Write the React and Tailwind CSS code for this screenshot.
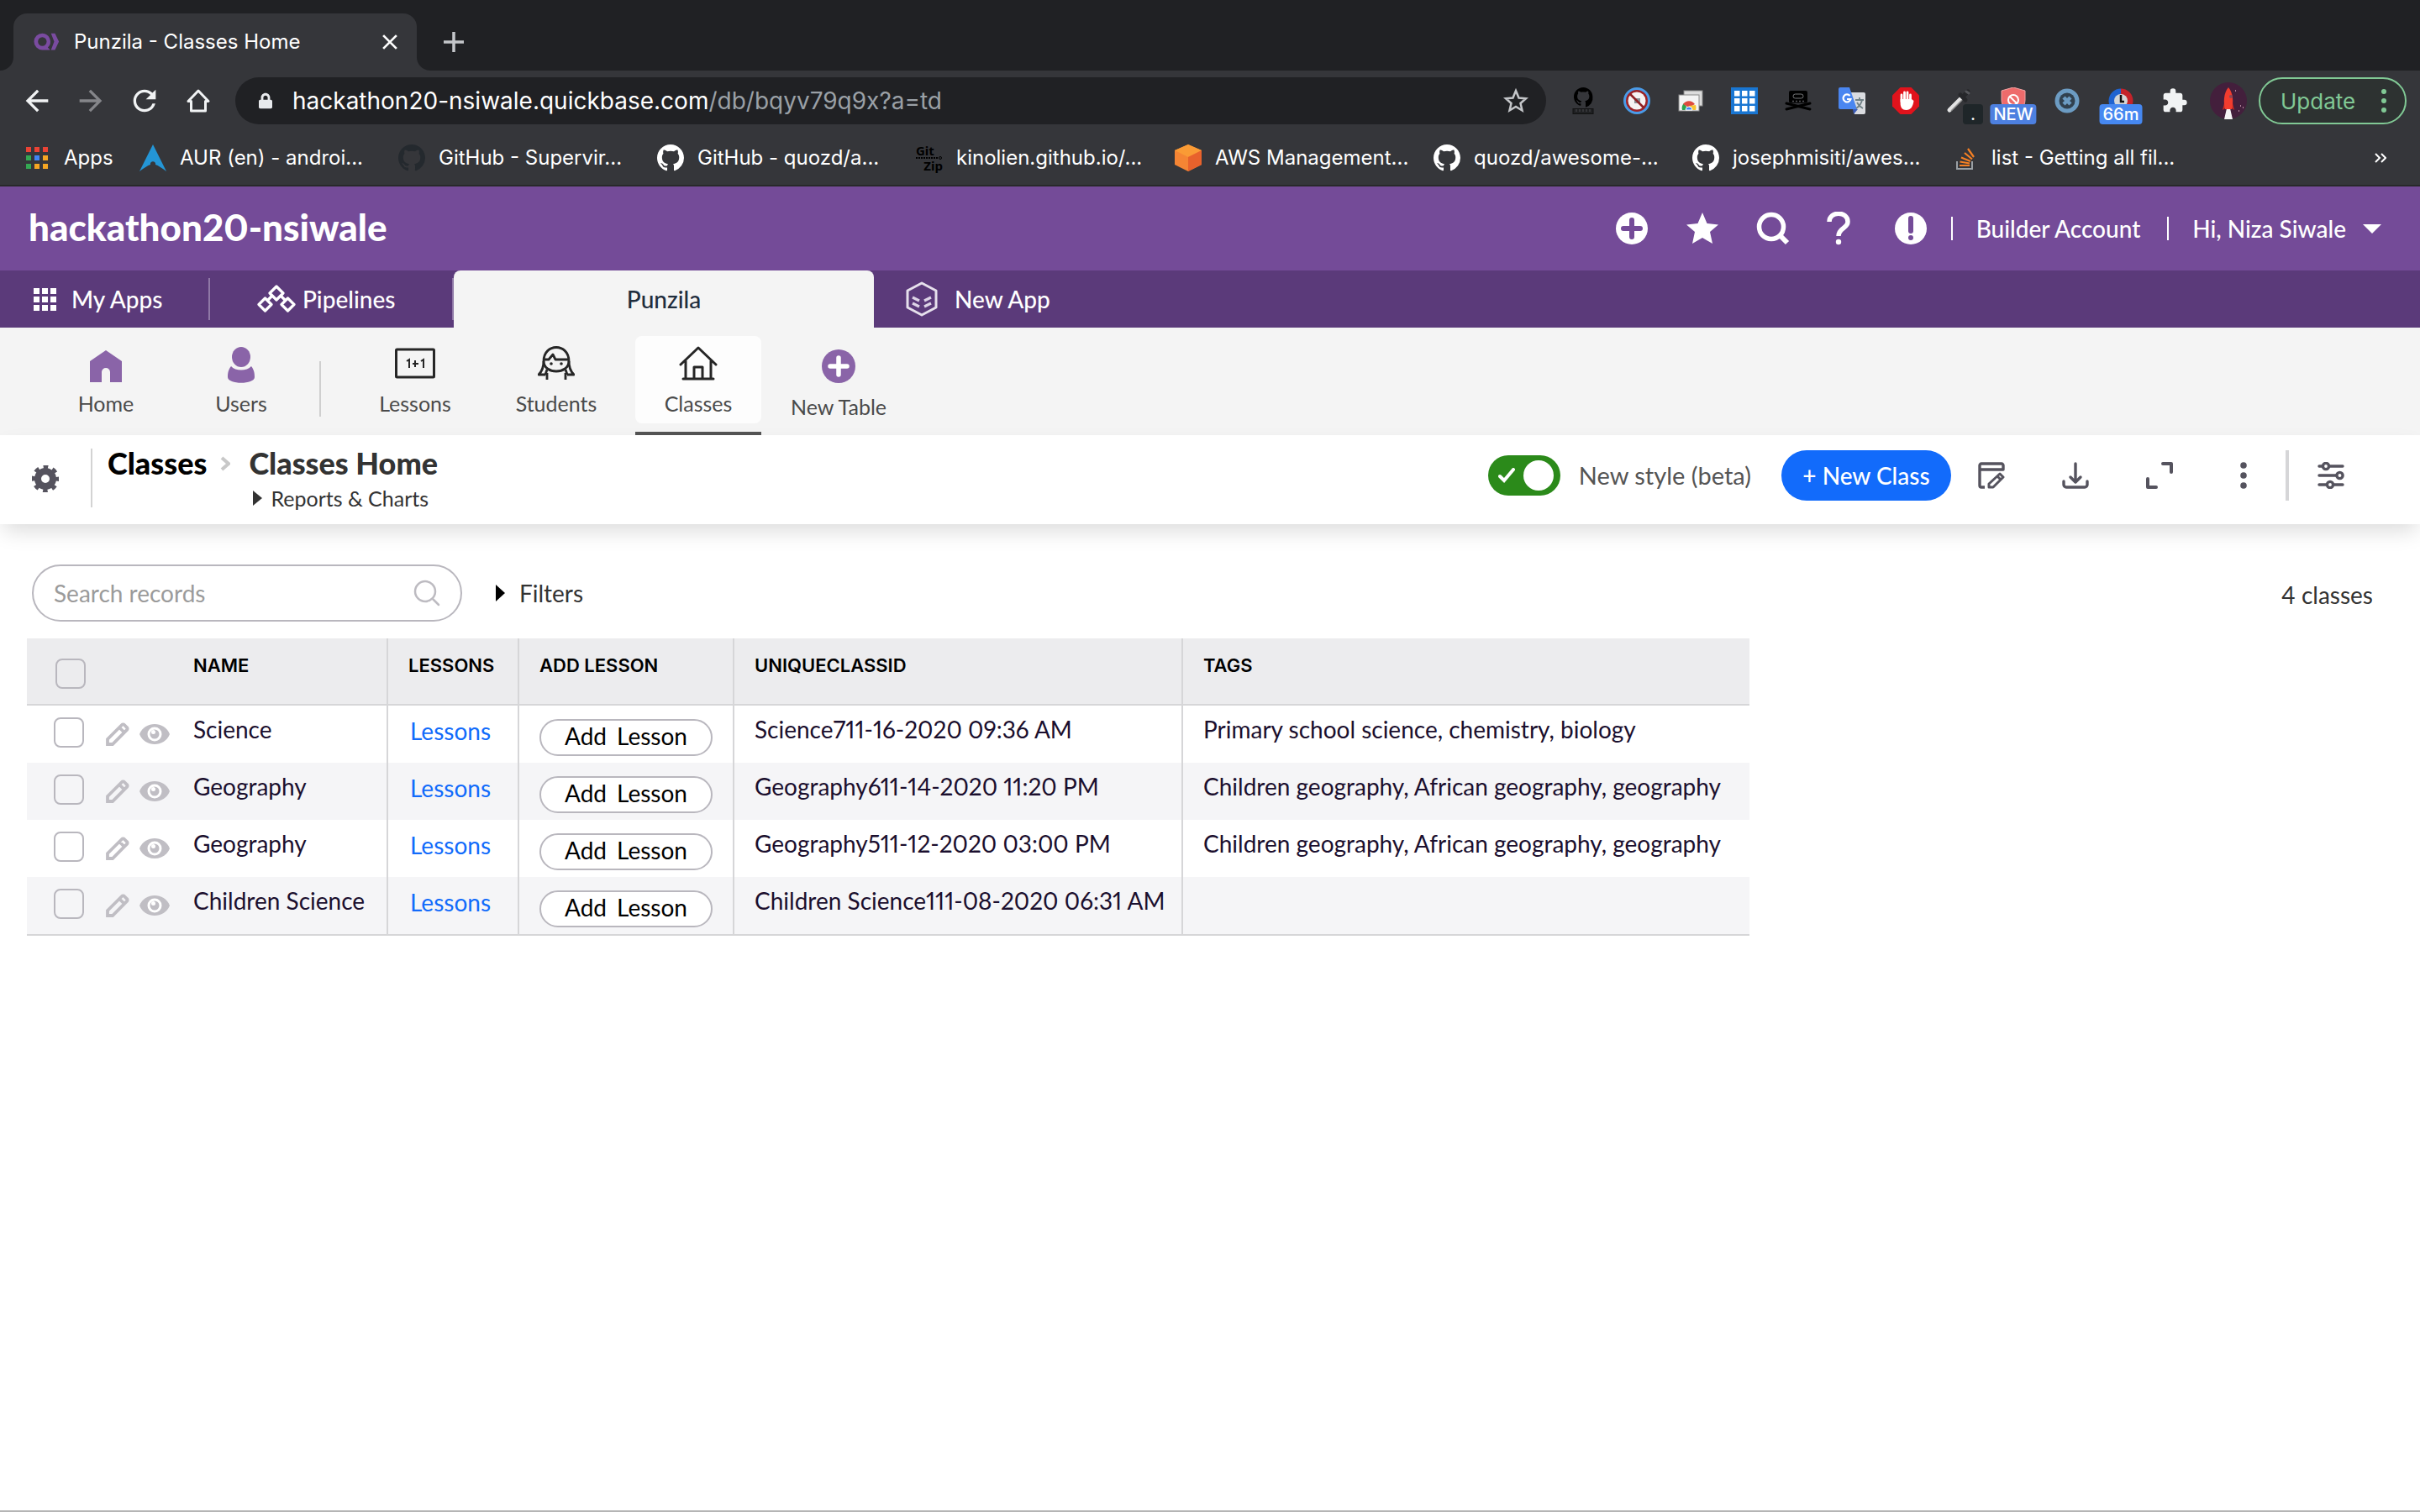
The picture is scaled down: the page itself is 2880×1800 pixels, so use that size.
import { FaLock } from "react-icons/fa";
import { MdArrowBack, MdArrowForward, MdRefresh } from "react-icons/md";

const Svg = ({ className, vb = "0 0 32 32", children }) => (
  <svg viewBox={vb} className={className} fill="none" aria-hidden="true">
    {children}
  </svg>
);

const GithubMark = ({ className }) => (
  <svg viewBox="0 0 16 16" className={className} fill="currentColor" aria-hidden="true">
    <path d="M8 0C3.58 0 0 3.58 0 8c0 3.54 2.29 6.53 5.47 7.59.4.07.55-.17.55-.38 0-.19-.01-.82-.01-1.49-2.01.37-2.53-.49-2.69-.94-.09-.23-.48-.94-.82-1.13-.28-.15-.68-.52-.01-.53.63-.01 1.08.58 1.23.82.72 1.21 1.87.87 2.33.66.07-.52.28-.87.51-1.07-1.78-.2-3.64-.89-3.64-3.95 0-.87.31-1.59.82-2.15-.08-.2-.36-1.02.08-2.12 0 0 .67-.21 2.2.82.64-.18 1.32-.27 2-.27s1.36.09 2 .27c1.53-1.04 2.2-.82 2.2-.82.44 1.1.16 1.92.08 2.12.51.56.82 1.27.82 2.15 0 3.07-1.87 3.75-3.65 3.95.29.25.54.73.54 1.48 0 1.07-.01 1.93-.01 2.2 0 .21.15.46.55.38A8.01 8.01 0 0 0 16 8c0-4.42-3.58-8-8-8z" />
  </svg>
);

/* ---------- Browser tab strip ---------- */
function TabStrip() {
  return (
    <div className="flex h-[84px] items-end bg-[#202124]">
      <Svg vb="0 0 16 16" className="size-4 shrink-0">
        <path d="M0 16H16V0A16 16 0 0 1 0 16Z" fill="#35363a" />
      </Svg>
      <div className="flex h-[68px] w-[480px] items-center rounded-t-2xl bg-[#35363a] pr-4 pl-6">
        <Svg vb="0 0 34 24" className="h-6 w-8">
          <path fillRule="evenodd" d="M11 1A10.500 10.500 0 1 0 11 22H21L18 19A10.500 10.500 0 0 0 11 1ZM11 6A5.500 5.500 0 1 1 11 17A5.500 5.500 0 0 1 11 6Z" fill="#7a4ba0" />
          <path d="M22 1H27L32 11.500L27 22H22L26 11.500Z" fill="#7a4ba0" />
        </Svg>
        <span className="ml-4 flex-1 text-[24px] text-white">Punzila - Classes Home</span>
        <button aria-label="Close tab" className="flex size-8 items-center justify-center">
          <Svg vb="0 0 16 16" className="size-[18px]">
            <path d="M1 1L15 15M15 1L1 15" stroke="#fff" strokeWidth="2.4" />
          </Svg>
        </button>
      </div>
      <Svg vb="0 0 16 16" className="size-4 shrink-0">
        <path d="M0 0A16 16 0 0 0 16 16H0Z" fill="#35363a" />
      </Svg>
      <button aria-label="New tab" className="ml-4 flex h-[68px] items-center">
        <Svg vb="0 0 24 24" className="size-6">
          <path d="M12 0V24M0 12H24" stroke="#c4c6ca" strokeWidth="3.500" />
        </Svg>
      </button>
    </div>
  );
}

/* ---------- Extension icons ---------- */
const extensions = [
  ["Octolinker", (
    <Svg>
      <g transform="translate(5 0) scale(1.4)" fill="#000">
        <path d="M8 0C3.58 0 0 3.58 0 8c0 3.54 2.29 6.53 5.47 7.59.4.07.55-.17.55-.38 0-.19-.01-.82-.01-1.49-2.01.37-2.53-.49-2.69-.94-.09-.23-.48-.94-.82-1.13-.28-.15-.68-.52-.01-.53.63-.01 1.08.58 1.23.82.72 1.21 1.87.87 2.33.66.07-.52.28-.87.51-1.07-1.78-.2-3.64-.89-3.64-3.95 0-.87.31-1.59.82-2.15-.08-.2-.36-1.02.08-2.12 0 0 .67-.21 2.2.82.64-.18 1.32-.27 2-.27s1.36.09 2 .27c1.53-1.04 2.2-.82 2.2-.82.44 1.1.16 1.92.08 2.12.51.56.82 1.27.82 2.15 0 3.07-1.87 3.75-3.65 3.95.29.25.54.73.54 1.48v2.200 0 .21.15.46.55.38A8.010 8.010 0 0 0 16 8c0-4.42-3.58-8-8-8z" />
      </g>
      <rect x="4" y="25.500" width="24" height="6" fill="#1f2022" stroke="#111" />
      <path d="M8 26v3M12 26v3M16 26v3M20 26v3M24 26v3" stroke="#4a4b4e" />
    </Svg>
  )],
  ["Site blocker", (
    <Svg>
      <circle cx="16" cy="16" r="14.500" fill="#9b2226" stroke="#4a9be8" strokeWidth="3" />
      <circle cx="16" cy="16" r="10.500" fill="#f6f3f3" />
      <rect x="13" y="13" width="7" height="6" fill="#8b8f94" />
      <path d="M8 8L24 24" stroke="#8f2024" strokeWidth="2.500" />
    </Svg>
  )],
  ["Remote desktop", (
    <Svg>
      <rect x="8" y="4" width="22" height="18" fill="#dcdcdc" stroke="#8a8a8a" />
      <rect x="2" y="9" width="24" height="19" fill="#f4f4f4" stroke="#8a8a8a" />
      <path d="M6 27A8 8 0 0 1 8 19L14 27Z" fill="#2da44e" />
      <path d="M7 20A8.500 8.500 0 0 1 21 20L14 24Z" fill="#dd4b3e" />
      <path d="M14 22L22 21A9 9 0 0 1 22 27H14Z" fill="#f7c331" />
      <path d="M10 27A4 4 0 0 1 18 27Z" fill="#4285f4" stroke="#fff" />
    </Svg>
  )],
  ["App grid", (
    <Svg>
      <rect width="32" height="32" fill="#1976d2" />
      <g fill="#fff">
        {[4, 13, 22].map((y) => [4, 13, 22].map((x) => <rect key={`${x}-${y}`} x={x} y={y} width="6.500" height="6.500" />))}
      </g>
    </Svg>
  )],
  ["Pirate tape", (
    <Svg>
      <path d="M2 19L30 26M30 19L2 26" stroke="#000" strokeWidth="3" strokeLinecap="round" />
      <rect x="5" y="4" width="22" height="14.500" rx="2" fill="#000" />
      <rect x="10" y="8" width="12" height="5" rx="2.500" stroke="#77787b" />
      <path d="M9 16.500H23" stroke="#55565a" strokeWidth="1.500" strokeDasharray="2 2" />
    </Svg>
  )],
  ["Translate", (
    <Svg>
      <path d="M14 6H30A2 2 0 0 1 32 8V30A2 2 0 0 1 30 32H19Z" fill="#dadce0" />
      <path d="M17 26H23L18 32Z" fill="#3a5bb8" />
      <path d="M2 0H13L22 26H2A2 2 0 0 1 0 24V2A2 2 0 0 1 2 0Z" fill="#4a86f0" />
      <path d="M13.500 10A4.500 4.500 0 1 0 14.500 14H10" stroke="#fff" strokeWidth="2.200" />
      <path d="M20 15H30M25 12V15M28 15C27 20 24 23 21 25M22 18C24 22 27 24 29 25" stroke="#6f8085" strokeWidth="1.800" />
    </Svg>
  )],
  ["Ad blocker", (
    <Svg>
      <path d="M9.500 0H22.500L32 9.500V22.500L22.500 32H9.500L0 22.500V9.500Z" fill="#e1131c" />
      <path d="M11 17V9M14.500 16V6M18 16V6M21.500 17V9" stroke="#fff" strokeWidth="2.800" strokeLinecap="round" />
      <path d="M9.600 14H23L25.500 16C24.500 23 22 27 16.500 27C12 27 9.600 24 9.600 19Z" fill="#fff" />
    </Svg>
  )],
  ["Color picker", (
    <Svg>
      <path d="M19 12L4 27" stroke="#e4e4e4" strokeWidth="5" strokeLinecap="round" />
      <path d="M19 15L6 28" stroke="#909090" strokeWidth="1.500" />
      <path d="M17 9L23 15M21 10L26 5" stroke="#26272a" strokeWidth="5" strokeLinecap="round" />
      <path d="M24 5L27 7" stroke="#55565a" strokeWidth="3" strokeLinecap="round" />
    </Svg>
  ), ".", "bg-[#1f2629]"],
  ["Shield", (
    <Svg>
      <path d="M16 0L30 4V15C30 24 22 30 16 32C10 30 2 24 2 15V4Z" fill="#ee6b6b" stroke="#f5a5a5" />
      <circle cx="16" cy="15" r="6" stroke="#fff" strokeWidth="2" />
      <path d="M12 11L20 19" stroke="#fff" strokeWidth="2" />
    </Svg>
  ), "NEW", "bg-[#4d80e0]"],
  ["Clear", (
    <Svg>
      <circle cx="16" cy="16" r="14.500" fill="#6c9cc3" />
      <circle cx="16" cy="16" r="9.500" fill="#31414f" />
      <path d="M12 12L20 20M20 12L12 20" stroke="#6c9cc3" strokeWidth="4.500" />
    </Svg>
  )],
  ["Timer", (
    <Svg>
      <path d="M16 1.500A14.500 14.500 0 0 0 16 30.500Z" fill="#1f63d0" />
      <path d="M16 1.500A14.500 14.500 0 0 1 16 30.500Z" fill="#c4232a" />
      <circle cx="16" cy="16" r="8" fill="#d4d6d8" />
      <path d="M16 9V17H20" stroke="#111" strokeWidth="2.500" />
    </Svg>
  ), "66m", "bg-[#4688f1]"],
];

function Extension({ label, icon, badge, badgeClass }) {
  return (
    <button aria-label={label} className="relative flex size-8 shrink-0 items-center justify-center">
      <span className="block size-8 [&>svg]:size-8">{icon}</span>
      {badge && (
        <span className={`absolute top-5 left-1/2 flex h-6 -translate-x-1/2 items-center justify-center rounded px-1 text-[20px] font-medium text-white ${badge === "." ? "ml-4 w-6" : ""} ${badgeClass}`}>
          {badge}
        </span>
      )}
    </button>
  );
}

/* ---------- Address bar ---------- */
function Toolbar() {
  return (
    <div className="flex h-[72px] items-center pr-4 pl-6">
      <div className="flex items-center gap-6">
        <button aria-label="Back"><MdArrowBack className="size-10 text-[#f1f3f4]" /></button>
        <button aria-label="Forward"><MdArrowForward className="size-10 text-[#85868a]" /></button>
        <button aria-label="Reload"><MdRefresh className="size-10 text-[#f1f3f4]" /></button>
        <button aria-label="Home page">
          <Svg vb="0 0 40 40" className="size-10">
            <path d="M20 8L32 20.500H28.500V32H11.500V20.500H8Z" stroke="#f1f3f4" strokeWidth="3" strokeLinejoin="round" />
          </Svg>
        </button>
      </div>
      <div className="ml-6 flex h-14 flex-1 items-center rounded-full bg-[#202124] pr-5 pl-7">
        <FaLock className="h-5 w-4 text-[#e8eaed]" />
        <span className="ml-6 flex-1 text-[28px] text-white">
          hackathon20-nsiwale.quickbase.com<span className="text-[#9aa0a6]">/db/bqyv79q9x?a=td</span>
        </span>
        <button aria-label="Bookmark this page">
          <Svg className="size-8">
            <path d="M16 4L19.500 12.500L28 13.200L21.500 19L23.500 27.500L16 23L8.500 27.500L10.500 19L4 13.200L12.500 12.500Z" stroke="#c4c6c9" strokeWidth="2.500" />
          </Svg>
        </button>
      </div>
      <div className="ml-7 flex items-center gap-8">
        {extensions.map(([label, icon, badge, badgeClass]) => (
          <Extension key={label} label={label} icon={icon} badge={badge} badgeClass={badgeClass} />
        ))}
        <button aria-label="Extensions">
          <svg viewBox="0 0 24 24" className="size-8" fill="#f1f3f4" aria-hidden="true">
            <path d="M20.500 11H19V7c0-1.100-.9-2-2-2h-4V3.500a2.500 2.500 0 0 0-5 0V5H4c-1.100 0-2 .9-2 2v3.800h1.500c1.490 0 2.700 1.210 2.700 2.700s-1.210 2.700-2.700 2.700H2V20c0 1.100.9 2 2 2h3.800v-1.500c0-1.490 1.210-2.700 2.700-2.700s2.700 1.210 2.700 2.700V22H17c1.100 0 2-.9 2-2v-4h1.500a2.500 2.500 0 0 0 0-5z" />
          </svg>
        </button>
      </div>
      <button aria-label="Profile" className="ml-[26px]">
        <Svg vb="0 0 44 44" className="size-11">
          <circle cx="22" cy="22" r="22" fill="#431f3c" />
          <path d="M17 44L20 31H24L27 44Z" fill="#f4f4f4" />
          <path d="M15 33L17 25H27L29 33L26 31H18Z" fill="#c92a22" />
          <path d="M22 6C28 13 28 24 26 32H18C16 24 16 13 22 6Z" fill="#f23c2e" />
          <circle cx="25" cy="17" r="2" fill="#8d4754" />
          <path d="M30 10h1M36 28h1M34 34h1M39 30h1" stroke="#d9a9bd" strokeWidth="1.500" />
        </Svg>
      </button>
      <button className="ml-[14px] flex h-14 w-[176px] items-center justify-between rounded-full border-2 border-[#81c995] bg-[#2d3231] pr-[22px] pl-6 text-[26px] text-[#81c995]">
        Update
        <Svg vb="0 0 6 28" className="h-7 w-[6px]">
          <g fill="#81c995"><circle cx="3" cy="3" r="3" /><circle cx="3" cy="14" r="3" /><circle cx="3" cy="25" r="3" /></g>
        </Svg>
      </button>
    </div>
  );
}

/* ---------- Bookmarks ---------- */
const AurIcon = () => (
  <Svg className="size-8">
    <path d="M16 0L32 32C27 28 22 25 19 24C20 19 12 19 13 24C10 25 5 28 0 32Z" fill="#2496d6" />
  </Svg>
);
const GitZipIcon = () => (
  <span className="flex size-8 flex-col justify-between font-['Noto_Sans',sans-serif] text-[15px] leading-[14px] font-bold text-black">
    <span>Git</span>
    <Svg vb="0 0 32 4" className="h-1 w-8">
      <path d="M0 2H26" stroke="#000" strokeWidth="2" strokeDasharray="2 1" />
      <circle cx="29" cy="2" r="1.500" stroke="#000" />
    </Svg>
    <span className="self-end">Zip</span>
  </span>
);
const AwsIcon = () => (
  <Svg className="size-8">
    <path d="M16 0L32 7V24L16 32L0 24V7Z" fill="#f58534" />
    <path d="M16 0L32 7L16 15L0 7Z" fill="#fa9b35" />
    <path d="M32 7V24L16 32V15Z" fill="#e8622c" />
  </Svg>
);
const StackIcon = () => (
  <Svg className="size-8">
    <path d="M7 20V29H25V20" stroke="#9aa0a4" strokeWidth="2" />
    <path d="M10 25H22M10.500 20.500L22 22.500M12 15.500L23 20M16 10L25 17.500M20 5L27 15" stroke="#f48024" strokeWidth="2.200" />
  </Svg>
);

const bookmarks = [
  [<AurIcon />, "AUR (en) - androi..."],
  [<GithubMark className="size-8 text-[#24292e]" />, "GitHub - Supervir..."],
  [<GithubMark className="size-8 text-white" />, "GitHub - quozd/a..."],
  [<GitZipIcon />, "kinolien.github.io/..."],
  [<AwsIcon />, "AWS Management..."],
  [<GithubMark className="size-8 text-white" />, "quozd/awesome-..."],
  [<GithubMark className="size-8 text-white" />, "josephmisiti/awes..."],
  [<StackIcon />, "list - Getting all fil..."],
];

const appColors = ["#ea4335", "#ea4335", "#ea4335", "#34a853", "#4285f4", "#f5a623", "#34a853", "#f5a623", "#f5a623"];

function Bookmarks() {
  return (
    <div className="flex h-[66px] items-center border-b-2 border-[#28292a] pr-10 pl-[31px] text-[24px] text-white">
      <a href="#apps" className="flex w-[135px] shrink-0 items-center gap-[19px]">
        <Svg vb="0 0 26 26" className="size-[26px]">
          {appColors.map((c, i) => (
            <rect key={i} x={(i % 3) * 10} y={Math.floor(i / 3) * 10} width="6" height="6" fill={c} />
          ))}
        </Svg>
        Apps
      </a>
      {bookmarks.map(([icon, label]) => (
        <a key={label} href="#bookmark" className="flex w-[308px] shrink-0 items-center gap-4 whitespace-nowrap">
          {icon}
          {label}
        </a>
      ))}
      <button aria-label="More bookmarks" className="ml-auto">
        <Svg vb="0 0 14 12" className="h-3 w-[14px]">
          <path d="M1 1L6 6L1 11M8 1L13 6L8 11" stroke="#fff" strokeWidth="2" />
        </Svg>
      </button>
    </div>
  );
}

/* ---------- Account header ---------- */
function AccountHeader() {
  return (
    <header className="flex h-[100px] items-center bg-[#744b98] pr-[46px] pl-[34px] text-[28px] font-medium text-white">
      <h1 className="flex-1 pb-1 text-[44px] font-black proportional-nums">hackathon20-nsiwale</h1>
      <div className="flex items-center gap-11">
        <button aria-label="Add">
          <Svg vb="0 0 40 40" className="size-10">
            <circle cx="20" cy="20" r="19" fill="#fff" />
            <path d="M20 10V30M10 20H30" stroke="#744b98" strokeWidth="6" strokeLinecap="round" />
          </Svg>
        </button>
        <button aria-label="Favorites">
          <Svg vb="0 0 40 40" className="size-10">
            <path d="M20 1L25.500 14L39 15.500L29 24L32 38L20 31L8 38L11 24L1 15.500L14.500 14Z" fill="#fff" />
          </Svg>
        </button>
        <button aria-label="Search">
          <Svg vb="0 0 40 40" className="size-10">
            <circle cx="18" cy="18" r="14.500" stroke="#fff" strokeWidth="5.500" />
            <path d="M28 28L37 37" stroke="#fff" strokeWidth="6" />
          </Svg>
        </button>
        <button aria-label="Help">
          <Svg vb="0 0 28 40" className="h-10 w-7">
            <path d="M3 12C3 -1 25 -1 25 12C25 20 14 19 14 29" stroke="#fff" strokeWidth="5.500" />
            <circle cx="14" cy="36" r="3.200" fill="#fff" />
          </Svg>
        </button>
        <button aria-label="Alerts" className="ml-2">
          <Svg vb="0 0 40 40" className="size-10">
            <circle cx="20" cy="20" r="19" fill="#fff" />
            <path d="M20 8V23" stroke="#744b98" strokeWidth="6" strokeLinecap="round" />
            <circle cx="20" cy="31" r="3" fill="#744b98" />
          </Svg>
        </button>
      </div>
      <span className="ml-7 h-7 w-[2px] bg-white" />
      <a href="#account" className="ml-7">Builder Account</a>
      <span className="ml-8 h-7 w-[2px] bg-white" />
      <button className="ml-7 flex items-center gap-5">
        Hi, Niza Siwale
        <span className="border-x-[11px] border-t-[11px] border-x-transparent border-t-white" />
      </button>
    </header>
  );
}

/* ---------- Application tabs ---------- */
function AppTabs() {
  return (
    <nav className="flex h-[68px] items-center bg-[#5b3a7a] text-[28px] font-medium text-white">
      <a href="#my-apps" className="flex w-[248px] items-center gap-[18px] pl-10">
        <Svg vb="0 0 27 27" className="size-[27px]">
          <g fill="#fff">
            {[0, 10, 20].map((y) => [0, 10, 20].map((x) => <rect key={`${x}-${y}`} x={x} y={y} width="7" height="7" />))}
          </g>
        </Svg>
        My Apps
      </a>
      <span className="h-[50px] w-[2px] bg-[#8f78a6]" />
      <a href="#pipelines" className="flex w-[288px] items-center gap-2 pl-14">
        <Svg vb="0 0 46 34" className="h-[34px] w-[46px]">
          <g stroke="#fff" strokeWidth="3.200" strokeLinejoin="round">
            <path d="M23 2L31 10L23 18L15 10Z" />
            <path d="M9.500 16L17 23.500L9.500 31L2 23.500Z" />
            <path d="M36.500 16L44 23.500L36.500 31L29 23.500Z" />
            <path d="M18 13L12 19M28 13L34 19" />
          </g>
        </Svg>
        Pipelines
      </a>
      <span className="h-[50px] w-[2px] bg-[#8f78a6]" />
      <a href="#punzila" className="flex h-full w-[500px] items-center justify-center rounded-t-lg bg-[#f4f4f4] text-[#1f2d3d]">
        Punzila
      </a>
      <a href="#new-app" className="flex items-center gap-[18px] pl-9">
        <Svg vb="0 0 42 42" className="size-[42px]">
          <g strokeLinejoin="round">
            <path d="M21 2L38 11V31L21 40L4 31V11Z" stroke="#e6e0ec" strokeWidth="3" />
            <path d="M10 19L18 23M10 26L18 30M32 19L24 23M32 26L24 30" strokeWidth="3.200" stroke="#ddd4e6" />
          </g>
        </Svg>
        New App
      </a>
    </nav>
  );
}

/* ---------- Table icons row ---------- */
function TableLink({ label, icon, className = "gap-2" }) {
  return (
    <a href={`#${label}`} className={`flex w-[150px] flex-col items-center pt-3 ${className}`}>
      {icon}
      <span className="whitespace-nowrap">{label}</span>
    </a>
  );
}

function TableNav() {
  return (
    <nav className="flex h-32 bg-[#f4f4f4] pt-[10px] pl-[51px] text-[25px] leading-8 text-[#4a4a4a]">
      <TableLink
        label="Home"
        className="gap-2"
        icon={
          <Svg vb="0 0 44 44" className="size-11">
            <path d="M22 5L41 18V43H27V31A5 5 0 0 0 17 31V43H3V18Z" fill="#8a64a8" />
          </Svg>
        }
      />
      <TableLink
        label="Users"
        className="ml-[11px] gap-2"
        icon={
          <Svg vb="0 0 44 44" className="size-11">
            <ellipse cx="22" cy="13" rx="11" ry="12" fill="#8a64a8" />
            <path d="M10 24C15 30 29 30 34 24C38 29 38 34 38 37C38 46 6 46 6 37C6 34 6 29 10 24Z" fill="#8a64a8" />
          </Svg>
        }
      />
      <span className="mt-[30px] ml-[18px] h-[66px] w-[2px] bg-[#cfcfcf]" />
      <TableLink
        label="Lessons"
        className="ml-[37px] gap-2"
        icon={
          <Svg vb="0 0 48 44" className="h-11 w-12">
            <rect x="1.500" y="4" width="45" height="33" rx="1" stroke="#262626" strokeWidth="3" />
            <g stroke="#262626" strokeWidth="2">
              <path d="M14 18L17 16V26M31 18L34 16V26M21 21H28M24 17V25" />
            </g>
          </Svg>
        }
      />
      <TableLink
        label="Students"
        className="ml-[18px] gap-2"
        icon={
          <Svg vb="0 0 44 44" className="size-11">
            <g stroke="#262626" strokeWidth="2.800" strokeLinejoin="round">
              <path d="M7 18C7 -4 37 -4 37 18C37 34 7 34 7 18Z" />
              <path d="M7 16H13L18 10L21 16H37" />
              <path d="M7 18C7 26 5 30 1 34H9M37 18C37 26 39 30 43 34H35M11 28L9 34M33 28L35 34M11 32V40M33 32V40" />
            </g>
            <circle cx="16" cy="21" r="1.800" fill="#262626" />
            <circle cx="28" cy="21" r="1.800" fill="#262626" />
          </Svg>
        }
      />
      <div className="ml-[19px] flex w-[150px] flex-col justify-between">
        <TableLink
          label="Classes"
          className="h-[104px] gap-2 rounded-lg bg-[#fdfdfd]"
          icon={
            <Svg vb="0 0 46 44" className="h-11 w-[46px]">
              <g stroke="#262626" strokeWidth="3" strokeLinecap="round" strokeLinejoin="round">
                <path d="M2 22L23 2L44 22M8 18V39M38 18V39M5 39H41M18 38V25H28V38" />
              </g>
            </Svg>
          }
        />
        <span className="h-1 bg-[#545454]" />
      </div>
      <TableLink
        label="New Table"
        className="ml-[17px] gap-3"
        icon={
          <Svg vb="0 0 44 44" className="size-11">
            <circle cx="22" cy="24" r="20" fill="#8a64a8" />
            <path d="M22 14V34M12 24H32" stroke="#fff" strokeWidth="5.500" strokeLinecap="round" />
          </Svg>
        }
      />
    </nav>
  );
}

/* ---------- Page header ---------- */
const stroke = { stroke: "#55535e", strokeWidth: 3.4, strokeLinejoin: "round", strokeLinecap: "round" };

function PageHeader() {
  return (
    <section className="relative flex h-[106px] items-start bg-white pr-[90px] pl-[38px] shadow-[0_12px_24px_-4px_rgba(0,0,0,0.14)]">
      <button aria-label="Table settings" className="mt-9">
        <Svg className="size-8">
          <circle cx="16" cy="16" r="9" stroke="#55535e" strokeWidth="8" />
          <circle cx="16" cy="16" r="14" stroke="#55535e" strokeWidth="5" strokeDasharray="5.500 5.496" strokeDashoffset="2.750" />
        </Svg>
      </button>
      <span className="mt-4 ml-[38px] h-[70px] w-[2px] bg-[#d3d3d3]" />
      <h2 className="mt-[13px] ml-[18px] text-[36px] leading-10 font-black text-black">Classes</h2>
      <Svg vb="0 0 12 18" className="mt-[25px] ml-4 h-[18px] w-3">
        <path d="M2 2L10 9L2 16" stroke="#c8c8c8" strokeWidth="4" />
      </Svg>
      <div className="mt-[13px] ml-[22px] flex-1">
        <h2 className="text-[36px] leading-10 font-black text-[#333]">Classes Home</h2>
        <button className="flex items-center gap-[10px] pt-[2px] pl-[5px] text-[25px] leading-10 text-[#333]">
          <span className="border-y-[9px] border-l-[11px] border-y-transparent border-l-[#333]" />
          Reports &amp; Charts
        </button>
      </div>
      <div className="mt-[18px] flex h-[60px] items-center">
        <label className="flex items-center gap-[22px] text-[29px] text-[#555]">
          <span className="relative flex h-12 w-[86px] items-center rounded-full bg-[#2b8a1a]">
            <input type="checkbox" defaultChecked className="absolute inset-0 size-full appearance-none" />
            <Svg vb="0 0 20 18" className="ml-3 h-[18px] w-5">
              <path d="M2 10L7 15L18 2" stroke="#fff" strokeWidth="4" strokeLinecap="round" />
            </Svg>
            <span className="mr-2 ml-auto size-9 rounded-full bg-white" />
          </span>
          New style (beta)
        </label>
        <button className="ml-9 h-[60px] w-[202px] rounded-full bg-[#126bfb] text-[28px] font-medium text-white">+ New Class</button>
        <button aria-label="Edit form" className="ml-8">
          <Svg className="size-8">
            <path d="M2 9H30V4A2 2 0 0 0 28 2H4A2 2 0 0 0 2 4V28A2 2 0 0 0 4 30H8" {...stroke} strokeLinecap="butt" />
            <path d="M26 14L30 18L18 30H13V26ZM23 17L27 21" {...stroke} strokeWidth="3" />
          </Svg>
        </button>
        <button aria-label="Download" className="ml-[68px]">
          <Svg className="size-8">
            <path d="M16 2V24M10 18L16 24L22 18M2 23V27A3 3 0 0 0 5 30H27A3 3 0 0 0 30 27V23" {...stroke} />
          </Svg>
        </button>
        <button aria-label="Full screen" className="ml-[68px]">
          <Svg className="size-8">
            <path d="M20 2H30V12M2 20V30H12" {...stroke} strokeWidth="4" />
          </Svg>
        </button>
        <button aria-label="More" className="ml-20">
          <Svg vb="0 0 8 32" className="h-8 w-2">
            <g fill="#55535e"><circle cx="4" cy="4" r="3.800" /><circle cx="4" cy="16" r="3.800" /><circle cx="4" cy="28" r="3.800" /></g>
          </Svg>
        </button>
        <span className="ml-[46px] h-[60px] w-1 bg-[#d6d6d8]" />
        <button aria-label="Customize" className="ml-[34px]">
          <Svg className="size-8">
            <path d="M2 5H6M14 5H30M2 16H22M2 27H11M19 27H30" {...stroke} />
            <g {...stroke}><circle cx="10" cy="5" r="3.600" /><circle cx="26.500" cy="16" r="3.600" /><circle cx="15" cy="27" r="3.600" /></g>
          </Svg>
        </button>
      </div>
    </section>
  );
}

/* ---------- Search and filters ---------- */
function FilterBar() {
  return (
    <div className="flex h-[68px] items-center pr-14 pl-[38px] text-[28px] text-[#333]">
      <label className="flex h-full w-[512px] items-center rounded-full border-2 border-[#b9b7be] pr-6 pl-6">
        <input type="text" aria-label="Search records" placeholder="Search records" className="w-0 flex-1 bg-transparent outline-none placeholder:text-[#9b9b9b]" />
        <Svg className="size-8">
          <circle cx="14" cy="14" r="12" stroke="#bdbbc1" strokeWidth="2.500" />
          <path d="M23 23L30 30" stroke="#bdbbc1" strokeWidth="2.500" strokeLinecap="round" />
        </Svg>
      </label>
      <button className="ml-10 flex items-center gap-[17px]">
        <span className="border-y-[10px] border-l-[11px] border-y-transparent border-l-black" />
        Filters
      </button>
      <span className="ml-auto pt-1 proportional-nums">4 classes</span>
    </div>
  );
}

/* ---------- Records table ---------- */
const rows = [
  ["Science", "Science711-16-2020 09:36 AM", "Primary school science, chemistry, biology"],
  ["Geography", "Geography611-14-2020 11:20 PM", "Children geography, African geography, geography"],
  ["Geography", "Geography511-12-2020 03:00 PM", "Children geography, African geography, geography"],
  ["Children Science", "Children Science111-08-2020 06:31 AM", ""],
];

function CheckBox({ label }) {
  return <input type="checkbox" aria-label={label} className="block size-9 appearance-none rounded-lg border-2 border-[#b9b7be]" />;
}

function RecordsTable() {
  return (
    <table className="mt-5 ml-8 w-[2050px] table-fixed border-separate border-spacing-0 text-left">
      <colgroup>
        <col className="w-[190px]" />
        <col className="w-[238px]" />
        <col className="w-[156px]" />
        <col className="w-[256px]" />
        <col className="w-[534px]" />
        <col />
      </colgroup>
      <thead>
        <tr className="h-20 bg-[#ececee] align-top font-['Inter',sans-serif] text-[22px] leading-8 text-black [&>th]:border-b-2 [&>th]:border-[#d6d6d8] [&>th]:pt-4 [&>th]:font-semibold">
          <th className="pl-[34px]"><div className="pt-2"><CheckBox label="Select all" /></div></th>
          <th className="pl-2">NAME</th>
          <th className="border-l-2 border-[#d6d6d8] pl-6">LESSONS</th>
          <th className="border-l-2 border-[#d6d6d8] pl-6">ADD LESSON</th>
          <th className="border-l-2 border-[#d6d6d8] pl-6">UNIQUECLASSID</th>
          <th className="border-l-2 border-[#d6d6d8] pl-6">TAGS</th>
        </tr>
      </thead>
      <tbody>
        {rows.map(([name, id, tags], i) => (
          <tr key={id} className="h-[68px] align-top text-[28px] leading-9 whitespace-nowrap text-[#1b0f2e] proportional-nums last:h-[70px] even:bg-[#f5f5f7] last:[&>td]:border-b-2 last:[&>td]:border-[#d6d6d8]">
            <td className="pt-[14px] pl-8">
              <div className="flex items-center">
                <CheckBox label={`Select ${name} ${i + 1}`} />
                <button aria-label="Edit" className="ml-[26px] pt-1">
                  <Svg vb="0 0 28 28" className="size-7">
                    <path d="M2 26V20L19 3A2 2 0 0 1 22 3L25 6A2 2 0 0 1 25 9L8 26ZM16 6L22 12" stroke="#c0bec4" strokeWidth="3.800" />
                  </Svg>
                </button>
                <button aria-label="View" className="ml-3 pt-1">
                  <Svg vb="0 0 36 24" className="h-6 w-9">
                    <path d="M0 12C6 -4 30 -4 36 12C30 28 6 28 0 12Z" fill="#c0bec4" />
                    <circle cx="18" cy="12" r="8.500" fill="#fff" />
                    <circle cx="18" cy="12" r="5.500" fill="#c0bec4" />
                    <circle cx="16.500" cy="9.500" r="2.500" fill="#fff" />
                  </Svg>
                </button>
              </div>
            </td>
            <td className="pt-[10px] pl-2">{name}</td>
            <td className="border-l-2 border-[#d6d6d8] pt-3 pl-[26px]"><a href="#lessons" className="text-[#126bfb]">Lessons</a></td>
            <td className="border-l-2 border-[#d6d6d8] pt-4 pl-6">
              <button className="flex h-11 w-[206px] items-center justify-center gap-3 rounded-full border-2 border-[#b9b7be] bg-white pb-1 text-black">
                <span>Add</span><span>Lesson</span>
              </button>
            </td>
            <td className="border-l-2 border-[#d6d6d8] pt-[10px] pl-6">{id}</td>
            <td className="border-l-2 border-[#d6d6d8] pt-[10px] pl-6">{tags}</td>
          </tr>
        ))}
      </tbody>
    </table>
  );
}

export default function App() {
  return (
    <div className="flex min-h-screen flex-col border-b-2 border-[#b5b5b5] bg-white font-['Lato',sans-serif]">
      <div className="bg-[#35363a] font-['Inter',sans-serif]">
        <TabStrip />
        <Toolbar />
        <Bookmarks />
      </div>
      <AccountHeader />
      <AppTabs />
      <TableNav />
      <PageHeader />
      <main className="pt-12">
        <FilterBar />
        <RecordsTable />
      </main>
    </div>
  );
}
